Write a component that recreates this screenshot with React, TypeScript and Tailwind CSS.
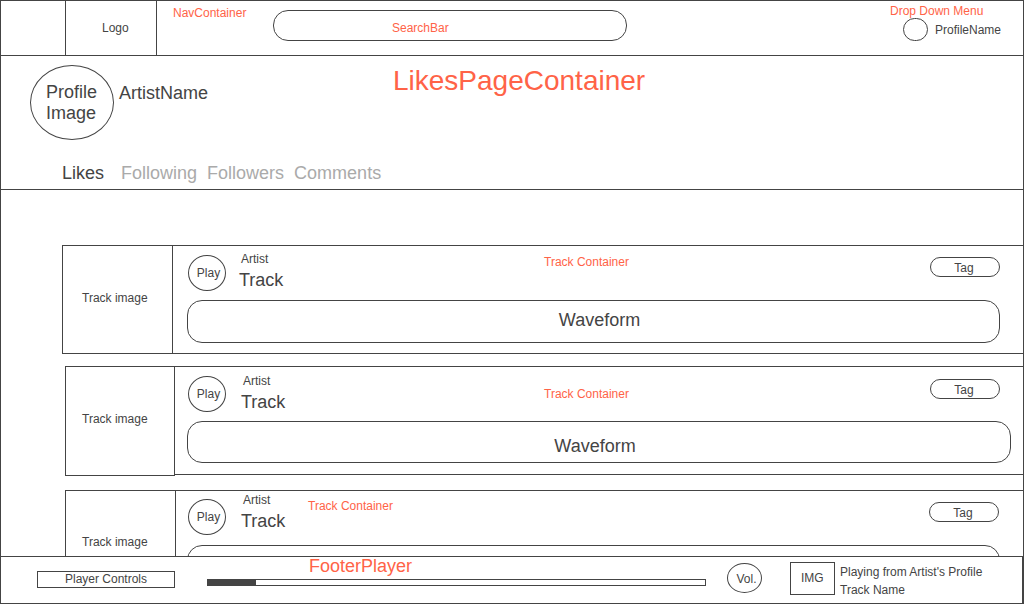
type Track = {
  row: string;
  image: string;
  body: string;
  play: string;
  text: string;
  label: string;
  tag: string;
  wave: string;
  waveText: string;
};

const tracks: Track[] = [
  {
    row: "mt-[55px] ml-[61px]",
    image: "h-[109px] w-[111px] pt-[44px] pl-[19px]",
    body: "pl-[14px]",
    play: "mt-[9px]",
    text: "mt-[5px] ml-[13px] w-[305px]",
    label: "mt-2",
    tag: "mt-[11px] mr-[23px]",
    wave: "h-[43px] mr-[23px] pl-3 pb-[2px]",
    waveText: "Waveform",
  },
  {
    row: "mt-3 ml-16",
    image: "h-[110px] w-[110px] pt-[44px] pl-4",
    body: "pl-3",
    play: "mt-[9px]",
    text: "mt-[6px] ml-[15px] w-[303px]",
    label: "mt-[19px]",
    tag: "mt-3 mr-[23px]",
    wave: "h-[42px] mr-3 pr-2 pt-2",
    waveText: "Waveform",
  },
  {
    row: "mt-[14px] ml-16",
    image: "h-[110px] w-[111px] pt-[43px] pl-4",
    body: "pl-[11px]",
    play: "mt-2",
    text: "mt-px ml-[15px] w-[67px]",
    label: "mt-[7px]",
    tag: "mt-[11px] mr-6",
    wave: "h-[43px] mr-[23px]",
    waveText: "",
  },
];

function TrackRow({ track }: { track: Track }) {
  return (
    <li className={`flex items-start ${track.row}`}>
      <div className={`shrink-0 border border-[#444] ${track.image}`}>Track image</div>
      <article className={`h-[109px] min-w-0 flex-1 border-y border-[#444] ${track.body}`}>
        <div className="flex h-[54px] items-start">
          <button
            className={`ml-px h-9 w-[38px] shrink-0 rounded-[50%] border border-[#444] pl-[3px] ${track.play}`}
          >
            Play
          </button>
          <div className={`shrink-0 ${track.text}`}>
            <p className="pl-[2px]">Artist</p>
            <h2 className="text-lg leading-[27px]">Track</h2>
          </div>
          <span className={`text-[#ff6347] ${track.label}`}>Track Container</span>
          <a
            href="#tag"
            className={`ml-auto h-5 w-[70px] rounded-[10px] border border-[#444] pt-[2px] pr-[2px] text-center ${track.tag}`}
          >
            Tag
          </a>
        </div>
        <div
          className={`flex items-center justify-center rounded-[15px] border border-[#444] text-lg leading-[21px] ${track.wave}`}
        >
          {track.waveText}
        </div>
      </article>
    </li>
  );
}

function NavBar() {
  return (
    <nav className="flex h-[55px] shrink-0 items-start border-b border-[#444]">
      <div className="h-full w-[65px] shrink-0 border-r border-[#444]" />
      <a href="#home" className="h-full w-[91px] shrink-0 border-r border-[#444] pt-[19px] pl-9">
        Logo
      </a>
      <span className="mt-1 w-[116px] shrink-0 pl-4 text-[#ff6347]">NavContainer</span>
      <input
        type="search"
        aria-label="Search"
        placeholder="SearchBar"
        className="mt-[9px] h-[31px] max-w-[354px] min-w-0 flex-1 rounded-[15px] border border-[#444] pt-1 pl-[118px] outline-none placeholder:text-[#ff6347]"
      />
      <div className="ml-auto w-[133px] shrink-0 pt-1">
        <p className="leading-[13px] whitespace-nowrap text-[#ff6347]">Drop Down Menu</p>
        <button className="flex items-center gap-[7px] pl-[13px]">
          <span className="h-[23px] w-[25px] rounded-[12px] border border-[#444]" />
          ProfileName
        </button>
      </div>
    </nav>
  );
}

function ProfileHeader() {
  return (
    <header className="flex h-[134px] shrink-0 flex-col justify-between border-b border-[#444] pt-[9px] pb-[5px] text-lg leading-[21px]">
      <div className="flex items-start pl-[29px]">
        <div className="h-[75px] w-[84px] shrink-0 rounded-[50%] border border-[#444] pt-4 pl-[15px]">
          Profile
          <br />
          Image
        </div>
        <h1 className="w-[279px] shrink-0 pt-[18px] pl-[5px]">ArtistName</h1>
        <p className="text-[28px] leading-8 text-[#ff6347]">LikesPageContainer</p>
      </div>
      <div className="flex gap-[10px] pl-[61px] text-[#aaa]">
        <a href="#likes" className="mr-[7px] text-[#444]">Likes</a>
        <a href="#following">Following</a>
        <a href="#followers">Followers</a>
        <a href="#comments">Comments</a>
      </div>
    </header>
  );
}

function FooterPlayer() {
  return (
    <footer className="flex h-12 shrink-0 items-start border-t border-r border-b border-[#444] pl-9">
      <button className="mt-[14px] h-[17px] w-[138px] shrink-0 border border-[#444] leading-[15px]">
        Player Controls
      </button>
      <div className="mr-[21px] ml-8 min-w-0 flex-1">
        <p className="pl-[102px] text-lg leading-[18px] text-[#ff6347]">FooterPlayer</p>
        <progress
          aria-label="Playback position"
          value={48}
          max={497}
          className="mt-1 block h-[7px] w-full appearance-none border border-[#444] [&::-webkit-progress-bar]:bg-white [&::-webkit-progress-value]:bg-[#444]"
        />
      </div>
      <button className="mt-[6px] h-[30px] w-[35px] shrink-0 rounded-[50%] border border-[#444] pt-px pl-1">
        Vol.
      </button>
      <div className="mt-[5px] ml-7 h-[33px] w-[45px] shrink-0 border border-[#444] pt-[7px] pl-[10px]">
        IMG
      </div>
      <div className="mt-[6px] w-[187px] shrink-0 pl-[5px] leading-[18px]">
        <p>Playing from Artist's Profile</p>
        <p>Track Name</p>
      </div>
    </footer>
  );
}

export default function App() {
  return (
    <div className="flex h-screen flex-col border-x border-t border-[#444] bg-white font-['Liberation_Sans',Arial,sans-serif] text-xs leading-4 text-[#444]">
      <NavBar />
      <ProfileHeader />
      <main className="min-h-0 flex-1 overflow-hidden">
        <ul>
          {tracks.map((track, index) => (
            <TrackRow key={index} track={track} />
          ))}
        </ul>
      </main>
      <FooterPlayer />
    </div>
  );
}
